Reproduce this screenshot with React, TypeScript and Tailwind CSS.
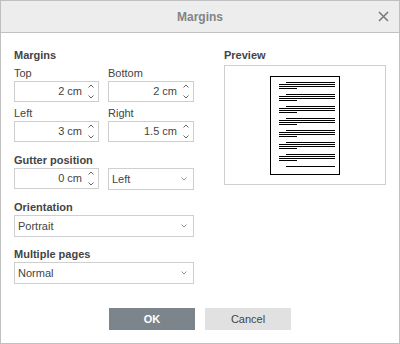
import React from "react";

const font = { fontFamily: '"Liberation Sans", Arial, sans-serif' };

function Spin() {
  return (
    <svg width="6" height="17" viewBox="0 0 6 17" className="shrink-0">
      <path d="M0.5 4.5 L3 2 L5.5 4.5" fill="none" stroke="#666" strokeWidth="1" />
      <path d="M0.5 12.5 L3 15 L5.5 12.5" fill="none" stroke="#666" strokeWidth="1" />
    </svg>
  );
}

function Chevron() {
  return (
    <svg width="6" height="4" viewBox="0 0 6 4" className="shrink-0">
      <path d="M0.5 0.5 L3 3 L5.5 0.5" fill="none" stroke="#999" strokeWidth="1" />
    </svg>
  );
}

function SpinInput({ value, w }: { value: string; w: string }) {
  return (
    <div className={`${w} h-[21px] border border-[#cfcfcf] flex items-center justify-end pr-[4px] gap-[6px] text-[11px] text-[#444]`}>
      <span>{value}</span>
      <Spin />
    </div>
  );
}

function Select({ value, w }: { value: string; w: string }) {
  return (
    <div className={`${w} h-[22px] border border-[#cfcfcf] flex items-center justify-between pl-[3px] pr-[6px] text-[11px] text-[#444]`}>
      <span>{value}</span>
      <Chevron />
    </div>
  );
}

function Label({ children, bold }: { children: React.ReactNode; bold?: boolean }) {
  return (
    <div className={`text-[11px] leading-[13px] text-[#444] ${bold ? "font-bold" : ""}`}>{children}</div>
  );
}

function Page() {
  const groups = [0, 1, 2, 3, 4, 5, 6];
  return (
    <div className="w-[70px] h-[99px] border border-black bg-white flex flex-col pt-[5px] pl-[8px]">
      {groups.map((g) => (
        <div key={g} className="flex flex-col gap-[1px] mb-[5px]">
          <div className="h-[1px] w-[49px] bg-black ml-[7px]" />
          <div className="h-[1px] w-[56px] bg-black" />
          <div className="h-[1px] w-[56px] bg-black" />
          <div className="h-[1px] w-[18px] bg-black" />
        </div>
      ))}
      <div className="h-[1px] w-[49px] bg-black ml-[7px]" />
    </div>
  );
}

export default function App() {
  return (
    <div style={font} className="w-[400px] h-[344px] border border-[#c0c0c0] bg-white flex flex-col">
      <div className="h-[32px] shrink-0 bg-[#ededed] border-b border-[#c0c0c0] flex items-center justify-center relative">
        <span className="text-[12px] font-bold text-[#848484]">Margins</span>
        <svg width="11" height="11" viewBox="0 0 11 11" className="absolute right-[10px] top-[10px]">
          <path d="M1 1 L10 10 M10 1 L1 10" stroke="#7c7c7c" strokeWidth="1.6" />
        </svg>
      </div>
      <div className="flex pl-[13px] pt-[16px] gap-[30px]">
        <div className="w-[180px] flex flex-col">
          <Label bold>Margins</Label>
          <div className="flex gap-[9px] mt-[5px]">
            <div className="flex flex-col gap-[1px]">
              <Label>Top</Label>
              <SpinInput value="2 cm" w="w-[85px]" />
            </div>
            <div className="flex flex-col gap-[1px]">
              <Label>Bottom</Label>
              <SpinInput value="2 cm" w="w-[86px]" />
            </div>
          </div>
          <div className="flex gap-[9px] mt-[5px]">
            <div className="flex flex-col gap-[1px]">
              <Label>Left</Label>
              <SpinInput value="3 cm" w="w-[85px]" />
            </div>
            <div className="flex flex-col gap-[1px]">
              <Label>Right</Label>
              <SpinInput value="1.5 cm" w="w-[86px]" />
            </div>
          </div>
          <div className="mt-[12px] flex flex-col gap-[1px]">
            <Label bold>Gutter position</Label>
            <div className="flex gap-[9px]">
              <SpinInput value="0 cm" w="w-[85px]" />
              <Select value="Left" w="w-[86px]" />
            </div>
          </div>
          <div className="mt-[11px] flex flex-col gap-[1px]">
            <Label bold>Orientation</Label>
            <Select value="Portrait" w="w-[180px]" />
          </div>
          <div className="mt-[11px] flex flex-col gap-[1px]">
            <Label bold>Multiple pages</Label>
            <Select value="Normal" w="w-[180px]" />
          </div>
        </div>
        <div className="flex flex-col">
          <Label bold>Preview</Label>
          <div className="mt-[3px] w-[162px] h-[120px] border border-[#cfcfcf] flex justify-center pt-[10px]">
            <Page />
          </div>
        </div>
      </div>
      <div className="flex justify-center gap-[10px] mt-auto mb-[13px]">
        <button className="w-[86px] h-[22px] bg-[#7d858c] text-white text-[11px] font-bold">OK</button>
        <button className="w-[86px] h-[22px] bg-[#e1e1e1] text-[#444] text-[11px]">Cancel</button>
      </div>
    </div>
  );
}
